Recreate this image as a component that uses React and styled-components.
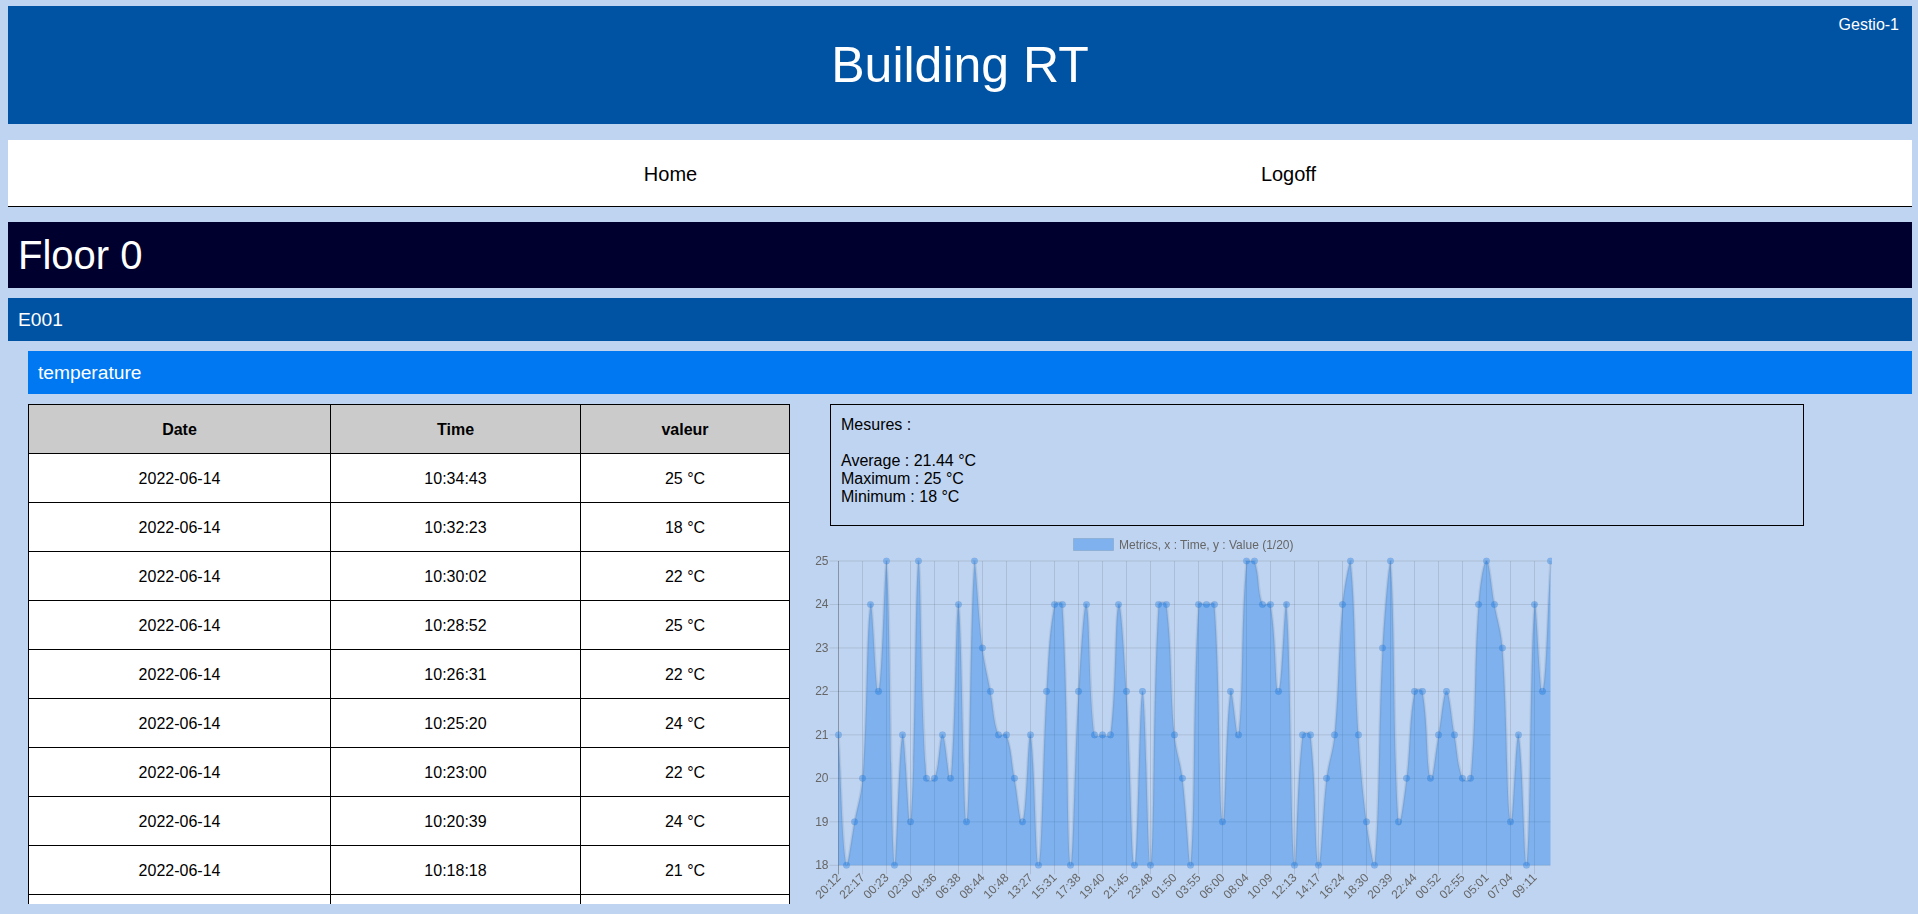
import React from 'react';
import styled, { createGlobalStyle } from 'styled-components';

const GlobalStyle = createGlobalStyle`
  html, body {
    margin: 0;
    height: 100%;
    overflow: hidden;
    background-color: #bfd4f0;
    font-family: "Liberation Sans", Arial, sans-serif;
    font-size: 16px;
    color: #000;
  }
`;

const Page = styled.div`
  box-sizing: border-box;
  height: 914px;
  padding: 6px 6px 10px 8px;
`;

const Viewport = styled.main`
  height: 100%;
  overflow: hidden;
`;

const Banner = styled.header`
  position: relative;
  height: 118px;
  display: flex;
  align-items: center;
  justify-content: center;
  background-color: #0052a3;
  color: #fff;
`;

const Title = styled.h1`
  margin: 0;
  font-size: 50px;
  font-weight: 400;
`;

const Account = styled.span`
  position: absolute;
  top: 10px;
  right: 13px;
  font-size: 16px;
`;

const Nav = styled.nav`
  box-sizing: border-box;
  height: 67px;
  margin-top: 16px;
  padding: 2px 0 0 39px;
  display: flex;
  align-items: center;
  justify-content: center;
  background-color: #fff;
  border-bottom: 1px solid #000;
`;

const NavLink = styled.a`
  width: 618px;
  text-align: center;
  font-size: 20px;
  color: #000;
`;

const FloorTitle = styled.h2`
  box-sizing: border-box;
  height: 66px;
  margin: 15px 0 0;
  padding: 0 10px;
  display: flex;
  align-items: center;
  background-color: #00002e;
  color: #fff;
  font-size: 40px;
  font-weight: 400;
`;

const SectionBar = styled.h3`
  box-sizing: border-box;
  height: 43px;
  margin: 10px 0 0 ${p => p.$indent || 0}px;
  padding: 0 10px;
  display: flex;
  align-items: center;
  background-color: ${p => p.$color};
  color: #fff;
  font-size: 19.2px;
  font-weight: 400;
`;

const Content = styled.section`
  margin: 10px 0 0 20px;
  display: flex;
  align-items: flex-start;
`;

const Table = styled.table`
  flex: none;
  width: 761px;
  table-layout: fixed;
  border-collapse: collapse;
  background-color: #fff;
  font-size: 16px;
`;

const HeadCell = styled.th`
  box-sizing: border-box;
  height: 49px;
  padding: 1px 0 0;
  border: 1px solid #000;
  background-color: #cbcbcb;
  font-weight: 700;
  width: ${p => p.$width}px;
`;

const Cell = styled.td`
  box-sizing: border-box;
  height: 49px;
  padding: 2px 0 0;
  border: 1px solid #000;
  text-align: center;
`;

const Side = styled.div`
  margin-left: 22px;
`;

const Measures = styled.div`
  box-sizing: border-box;
  width: 974px;
  height: 122px;
  margin-left: 18px;
  padding: 11px 10px 0;
  border: 1px solid #000;
  line-height: 18px;
`;

const MeasureLine = styled.div`
  margin-bottom: ${p => (p.$spaced ? 18 : 0)}px;
`;

const ChartSvg = styled.svg`
  display: block;
  margin-top: 2px;
  font-family: "Liberation Sans", Arial, sans-serif;
  font-size: 12px;
  filter: blur(0.35px);
`;

const rows = [
  ['10:34:43', 25],
  ['10:32:23', 18],
  ['10:30:02', 22],
  ['10:28:52', 25],
  ['10:26:31', 22],
  ['10:25:20', 24],
  ['10:23:00', 22],
  ['10:20:39', 24],
  ['10:18:18', 21],
];

const values = [
  21, 18, 19, 20, 24, 22, 25, 18, 21, 19, 25, 20, 20, 21, 20, 24, 19, 25, 23, 22, 21, 21, 20, 19, 21, 18, 22, 24, 24, 18,
  22, 24, 21, 21, 21, 24, 22, 18, 22, 18, 24, 24, 21, 20, 18, 24, 24, 24, 19, 22, 21, 25, 25, 24, 24, 22, 24, 18, 21, 21,
  18, 20, 21, 24, 25, 21, 19, 18, 23, 25, 19, 20, 22, 22, 20, 21, 22, 21, 20, 20, 24, 25, 24, 23, 19, 21, 18, 24, 22, 25,
];

const timeLabels = [
  '20:12', '22:17', '00:23', '02:30', '04:36', '06:38', '08:44', '10:48', '13:27', '15:31',
  '17:38', '19:40', '21:45', '23:48', '01:50', '03:55', '06:00', '08:04', '10:09', '12:13',
  '14:17', '16:24', '18:30', '20:39', '22:44', '00:52', '02:55', '05:01', '07:04', '09:11',
];

// plot area, in svg coordinates
const LEFT = 26.5;
const STEP_X = 8;
const TOP = 33;
const BOTTOM = 337.3;
const RIGHT = LEFT + STEP_X * (values.length - 1);
const STEP_Y = (BOTTOM - TOP) / 7;
const TENSION = 0.4;

const yFor = v => BOTTOM - (v - 18) * STEP_Y;
const points = values.map((v, i) => ({ x: LEFT + i * STEP_X, y: yFor(v) }));
const clampY = y => Math.min(BOTTOM, Math.max(TOP, y));

// same control points as a chart.js line with tension 0.4
const buildCurve = () => {
  const controls = points.map((cur, i) => {
    const prev = points[i - 1] || cur;
    const next = points[i + 1] || cur;
    const d01 = Math.hypot(cur.x - prev.x, cur.y - prev.y);
    const d12 = Math.hypot(next.x - cur.x, next.y - cur.y);
    const total = d01 + d12 || 1;
    const fa = (TENSION * d01) / total;
    const fb = (TENSION * d12) / total;
    return {
      inX: cur.x - fa * (next.x - prev.x),
      inY: clampY(cur.y - fa * (next.y - prev.y)),
      outX: cur.x + fb * (next.x - prev.x),
      outY: clampY(cur.y + fb * (next.y - prev.y)),
    };
  });
  let d = `M${points[0].x} ${points[0].y}`;
  for (let i = 1; i < points.length; i++) {
    const a = controls[i - 1];
    const b = controls[i];
    d += ` C${a.outX} ${a.outY} ${b.inX} ${b.inY} ${points[i].x} ${points[i].y}`;
  }
  return d;
};

const curve = buildCurve();
const FILL = 'rgba(0, 112, 232, 0.34)';
const GRID = 'rgba(0, 0, 0, 0.1)';
const EDGE = 'rgba(60, 70, 90, 0.1)';

const Chart = () => (
  <ChartSvg width="740" height="376" viewBox="0 0 740 376">
    <rect x="261.5" y="10.5" width="40" height="12" fill={FILL} stroke={GRID} />
    <text x="307" y="20.5" fill="#666">Metrics, x : Time, y : Value (1/20)</text>

    {[18, 19, 20, 21, 22, 23, 24, 25].map(v => (
      <g key={v}>
        <line x1={LEFT - 9} x2={RIGHT} y1={yFor(v)} y2={yFor(v)} stroke={GRID} />
        <text x={LEFT - 10} y={yFor(v) + 4} fill="#666" textAnchor="end">{v}</text>
      </g>
    ))}
    {timeLabels.map((label, i) => {
      const x = LEFT + i * 3 * STEP_X;
      return (
        <g key={i}>
          <line x1={x} x2={x} y1={TOP} y2={BOTTOM + 9} stroke={i === 0 ? 'rgba(0, 0, 0, 0.3)' : GRID} />
          <text
            x={x + 3}
            y={BOTTOM + 13}
            fill="#666"
            textAnchor="end"
            transform={`rotate(-45 ${x + 3} ${BOTTOM + 13})`}
          >
            {label}
          </text>
        </g>
      );
    })}

    <path d={`${curve} L${RIGHT} ${BOTTOM} L${LEFT} ${BOTTOM} Z`} fill={FILL} />
    <path d={curve} fill="none" stroke={EDGE} strokeWidth="2.5" />
    {points.map((p, i) => (
      <circle key={i} cx={p.x} cy={p.y} r="3.3" fill="rgba(0, 112, 232, 0.32)" stroke="rgba(0, 0, 0, 0.04)" />
    ))}
  </ChartSvg>
);

const App = () => (
  <Page>
    <GlobalStyle />
    <Viewport>
      <Banner>
        <Title>Building RT</Title>
        <Account>Gestio-1</Account>
      </Banner>
      <Nav>
        <NavLink>Home</NavLink>
        <NavLink>Logoff</NavLink>
      </Nav>
      <FloorTitle>Floor 0</FloorTitle>
      <SectionBar $color="#0052a3">E001</SectionBar>
      <SectionBar $color="#0078f2" $indent={20}>temperature</SectionBar>
      <Content>
        <Table>
          <thead>
            <tr>
              <HeadCell $width={302}>Date</HeadCell>
              <HeadCell $width={250}>Time</HeadCell>
              <HeadCell $width={209}>valeur</HeadCell>
            </tr>
          </thead>
          <tbody>
            {rows.map(([time, value]) => (
              <tr key={time}>
                <Cell>2022-06-14</Cell>
                <Cell>{time}</Cell>
                <Cell>{value} °C</Cell>
              </tr>
            ))}
            <tr>
              <Cell />
              <Cell />
              <Cell />
            </tr>
          </tbody>
        </Table>
        <Side>
          <Measures>
            <MeasureLine $spaced>Mesures :</MeasureLine>
            <MeasureLine>Average : 21.44 °C</MeasureLine>
            <MeasureLine>Maximum : 25 °C</MeasureLine>
            <MeasureLine>Minimum : 18 °C</MeasureLine>
          </Measures>
          <Chart />
        </Side>
      </Content>
    </Viewport>
  </Page>
);

export default App;
